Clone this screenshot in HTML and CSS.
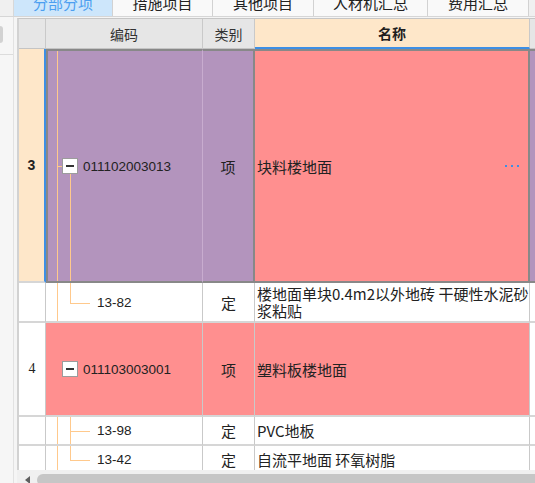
FILE: index.html
```html
<!DOCTYPE html>
<html lang="zh-CN">
<head>
<meta charset="utf-8">
<title>分部分项</title>
<link rel="stylesheet" href="styles.css">
</head>
<body>
<div class="app">
  <div class="topbar">
    <div class="topcorner"></div>
    <div class="tabs">
      <div class="tab active w99">分部分项</div>
      <div class="tab w100">措施项目</div>
      <div class="tab w101">其他项目</div>
      <div class="tab w114">人材机汇总</div>
      <div class="tab w101">费用汇总</div>
    </div>
  </div>
  <div class="main">
    <aside class="side">
      <div class="side-item"><span class="nub"></span></div>
    </aside>
    <div class="content">
      <div class="viewport">
        <div class="grid">
          <div class="c h corner"></div>
          <div class="c h">编码</div>
          <div class="c h">类别</div>
          <div class="c h hname">名称</div>
          <div class="c h hextra"></div>

          <div class="c num sel-num">3</div>
          <div class="c code tree-parent sel sel-code"><span class="tog"></span>011102003013</div>
          <div class="c type sel sel-type">项</div>
          <div class="c name sel sel-name"><span>块料楼地面</span><span class="more"><i></i><i></i><i></i></span></div>
          <div class="c extra sel sel-extra"><span class="vtext">1.找平层厚度砂浆配合比</span></div>

          <div class="c num"></div>
          <div class="c code tree-child tree-last">13-82</div>
          <div class="c type">定</div>
          <div class="c name"><span class="lines">楼地面单块0.4m2以外地砖 干硬性水泥砂<br>浆粘贴</span></div>
          <div class="c extra"></div>

          <div class="c num plain-num">4</div>
          <div class="c code tree-parent hl"><span class="tog"></span>011103003001</div>
          <div class="c type hl">项</div>
          <div class="c name hl">塑料板楼地面</div>
          <div class="c extra"><span class="vtext">1.找平</span></div>

          <div class="c num"></div>
          <div class="c code tree-child">13-98</div>
          <div class="c type">定</div>
          <div class="c name">PVC地板</div>
          <div class="c extra"></div>

          <div class="c num"></div>
          <div class="c code tree-child tree-last">13-42</div>
          <div class="c type">定</div>
          <div class="c name">自流平地面 环氧树脂</div>
          <div class="c extra"></div>
        </div>
      </div>
      <div class="hscroll">
        <svg class="arrow" width="5" height="8" viewBox="0 0 5 8"><path d="M5 0 L0 4 L5 8 Z" fill="#5f5f5f"/></svg>
        <div class="thumb"></div>
      </div>
    </div>
  </div>
</div>
</body>
</html>
```
FILE: styles.css
```css
* { box-sizing: border-box; }
html, body { margin: 0; padding: 0; }
body {
  width: 535px;
  height: 483px;
  overflow: hidden;
  background: #f0f0f0;
  font-family: "Noto Sans CJK SC", "Liberation Sans", sans-serif;
  color: #222;
}
.app { display: flex; flex-direction: column; height: 483px; }

.topbar { display: flex; height: 17px; flex: none; overflow: hidden; border-bottom: 1px solid #d6d6d6; }
.topcorner { width: 14px; flex: none; border-right: 1px solid #d8d8d8; background: #f0f0f0; }
.tabs { display: flex; }
.tab {
  height: 29px;
  margin-top: -12px;
  line-height: 29px;
  text-align: center;
  font-size: 15px;
  background: #f9f9f9;
  border-right: 1px solid #d2d2d2;
  color: #222;
  flex: none;
}
.tab.active { background: #cde6fb; color: #4c9ff0; }
.w99 { width: 99px; }
.w100 { width: 100px; }
.w101 { width: 101px; }
.w114 { width: 114px; }

.main { flex: 1; display: flex; min-height: 0; }
.side {
  width: 14px;
  flex: none;
  background: #f6f6f6;
  border-right: 1px solid #e2e2e2;
}
.side-item {
  height: 38px;
  border-bottom: 1px solid #dcdcdc;
  padding-top: 9px;
}
.nub {
  display: block;
  width: 3px;
  height: 17px;
  background: #d2d2d2;
  border-radius: 0 3px 3px 0;
}
.content {
  flex: 1;
  min-width: 0;
  display: flex;
  flex-direction: column;
  padding: 1px 0 0 3px;
  background: #f5f5f5;
}
.viewport {
  height: 452px;
  flex: none;
  overflow: hidden;
  border-top: 1px solid #c6c6c6;
  border-left: 2px solid #d2d2d2;
  background: #fff;
}
.grid {
  display: grid;
  grid-template-columns: 27px 157px 52px 275px 22px;
  grid-template-rows: 30px 234px 40px 94px 29px 29px;
  width: 533px;
}
.c {
  display: flex;
  align-items: center;
  min-width: 0;
  overflow: hidden;
  white-space: nowrap;
  font-size: 15px;
  background: #fff;
  border-right: 1px solid #c9c9c9;
  border-bottom: 2px solid #d6d6d6;
}
.h {
  background: #e6e6e6;
  justify-content: center;
  font-size: 14px;
  color: #333;
  border-bottom: 1px solid #c4c4c4;
}
.hname {
  background: #fee7c9;
  font-weight: bold;
  color: #1e1e1e;
  border-bottom: 2px solid #3d8fe5;
}
.hextra { background: #e6e6e6; }

.num { justify-content: center; }
.sel-num {
  background: #fee7c9;
  border-right: 2px solid #3d8fe5;
  font-family: "Liberation Sans", sans-serif;
  font-weight: bold;
  font-size: 14px;
  color: #222;
}
.plain-num {
  font-family: "Liberation Serif", serif;
  font-size: 14px;
}

.code {
  font-family: "Liberation Sans", sans-serif;
  font-size: 13.5px;
  color: #222;
  background-repeat: no-repeat;
  background-origin: border-box;
}
.tree-parent {
  padding-left: 16px;
  background-image:
    linear-gradient(#ffc98c, #ffc98c),
    linear-gradient(#ffc98c, #ffc98c),
    linear-gradient(#ffc98c, #ffc98c);
  background-size: 1px 100%, 6px 1px, 1px 50%;
  background-position: 11px 0, 11px 50%, 24px 100%;
}
.tree-child {
  padding-left: 51px;
  background-image:
    linear-gradient(#ffc98c, #ffc98c),
    linear-gradient(#ffc98c, #ffc98c),
    linear-gradient(#ffc98c, #ffc98c);
  background-size: 1px 100%, 1px 100%, 20px 1px;
  background-position: 11px 0, 24px 0, 24px 50%;
}
.tree-last {
  background-size: 1px 100%, 1px 50%, 20px 1px;
  background-position: 11px 0, 24px 0, 24px 50%;
}
.tog {
  width: 16px;
  height: 16px;
  flex: none;
  margin-right: 5px;
  border: 1px solid #9c9c9c;
  background: #fff;
  display: flex;
  align-items: center;
  justify-content: center;
}
.tog::before {
  content: "";
  width: 8px;
  height: 2px;
  background: #333;
}

.type { justify-content: center; }
.name { padding-left: 2px; padding-right: 8px; }
.lines { line-height: 17.5px; }
.more { margin-left: auto; display: flex; gap: 4px; margin-right: 1px; }
.more i { display: block; width: 2px; height: 2px; background: #3d8fe5; }

.extra { padding-left: 5px; white-space: normal; }
.vtext { display: block; width: 15px; line-height: 15.5px; font-size: 15px; color: #444; }

.hl { background: #ff8f8f; }
.sel { border-top: 2px solid #888; border-bottom: 2px solid #888; }
.sel-code {
  background-color: #b394bd;
  border-left: 2px solid #888;
  border-right: 1px solid #c8accf;
  padding-left: 14px;
}
.sel-type { background: #b394bd; border-right: 2px solid #888; }
.sel-name { background: #ff8f8f; border-right: 2px solid #888; }
.sel-extra { background: #b394bd; border-right: none; }

.hscroll {
  height: 13px;
  flex: none;
  display: flex;
  align-items: flex-start;
  background: #f0f0f0;
  overflow: hidden;
}
.arrow { flex: none; margin: 6px 0 0 8px; }
.thumb {
  flex: 1;
  height: 12px;
  margin: 4px -10px 0 7px;
  background: #c6c6c6;
  border-radius: 6px 0 0 6px;
}
```
